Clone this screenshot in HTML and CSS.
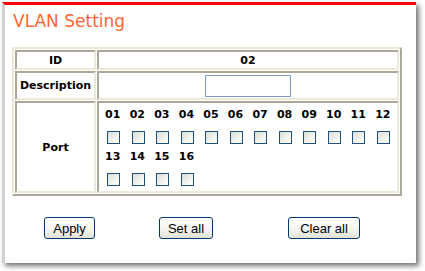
FILE: index.html
```html
<!DOCTYPE html>
<html>
<head>
<meta charset="utf-8">
<title>VLAN Setting</title>
<link rel="stylesheet" href="styles.css">
</head>
<body>
<div class="window">
  <h1 class="title">VLAN Setting</h1>
  <table class="vlan">
    <tr class="row-id">
      <td class="head">ID</td>
      <td class="val">02</td>
    </tr>
    <tr class="row-desc">
      <td class="head">Description</td>
      <td class="val"><input class="desc" type="text"></td>
    </tr>
    <tr class="row-port">
      <td class="head">Port</td>
      <td class="ports">
        <div class="port-grid">
          <label class="port"><span>01</span><input type="checkbox"></label>
          <label class="port"><span>02</span><input type="checkbox"></label>
          <label class="port"><span>03</span><input type="checkbox"></label>
          <label class="port"><span>04</span><input type="checkbox"></label>
          <label class="port"><span>05</span><input type="checkbox"></label>
          <label class="port"><span>06</span><input type="checkbox"></label>
          <label class="port"><span>07</span><input type="checkbox"></label>
          <label class="port"><span>08</span><input type="checkbox"></label>
          <label class="port"><span>09</span><input type="checkbox"></label>
          <label class="port"><span>10</span><input type="checkbox"></label>
          <label class="port"><span>11</span><input type="checkbox"></label>
          <label class="port"><span>12</span><input type="checkbox"></label>
          <label class="port"><span>13</span><input type="checkbox"></label>
          <label class="port"><span>14</span><input type="checkbox"></label>
          <label class="port"><span>15</span><input type="checkbox"></label>
          <label class="port"><span>16</span><input type="checkbox"></label>
        </div>
      </td>
    </tr>
  </table>
  <div class="actions">
    <button class="btn btn-apply">Apply</button>
    <button class="btn btn-set">Set all</button>
    <button class="btn btn-clear">Clear all</button>
  </div>
</div>
</body>
</html>
```

FILE: styles.css
```css
html, body {
  margin: 0;
  padding: 0;
  background: #ffffff;
}

body {
  padding: 2px 9px 8px 2px;
  width: 425px;
  height: 271px;
  box-sizing: border-box;
  overflow: hidden;
}

.window {
  box-sizing: border-box;
  width: 414px;
  height: 261px;
  background: #ffffff;
  border-top: 3px solid #ff0000;
  border-left: 3px solid #d2d2d2;
  box-shadow: 3px 3px 5px rgba(0, 0, 0, 0.55);
}

.title {
  margin: 0;
  padding: 6px 0 0 8px;
  height: 20px;
  font-family: "DejaVu Sans", Verdana, sans-serif;
  font-size: 17px;
  line-height: 20px;
  font-weight: normal;
  color: #ff6633;
}

.vlan {
  margin: 16px 0 0 7px;
  width: 390px;
  border-collapse: separate;
  border-spacing: 1px;
  border-style: solid;
  border-width: 2px;
  border-color: #ece9d8 #aca899 #aca899 #ece9d8;
  font-family: "DejaVu Sans", Verdana, sans-serif;
  font-size: 11px;
  font-weight: bold;
  color: #000000;
}

.vlan td {
  padding: 0;
  border-style: solid;
  border-width: 2px;
  border-color: #aca899 #ece9d8 #ece9d8 #aca899;
  text-align: center;
  vertical-align: middle;
}

.vlan td.head {
  width: 77px;
}

.row-id { height: 20px; }
.row-desc { height: 29px; }
.row-port { height: 91px; }

.desc {
  box-sizing: border-box;
  width: 86px;
  height: 22px;
  margin: 0;
  padding: 0 2px;
  border: 1px solid #7f9db9;
  background: #ffffff;
  vertical-align: middle;
}

.vlan td.ports {
  text-align: left;
  vertical-align: top;
  padding: 0 0 0 1.5px;
}

.port-grid {
  display: grid;
  grid-template-columns: repeat(12, 24.55px);
  padding-top: 4px;
}

.port {
  display: flex;
  flex-direction: column;
  align-items: center;
  height: 42px;
}

.port span {
  display: block;
  line-height: 16px;
  height: 16px;
}

.port input {
  appearance: none;
  -webkit-appearance: none;
  box-sizing: border-box;
  width: 13px;
  height: 13px;
  margin: 8px 0 0 1.5px;
  border: 1px solid #1c5180;
  background: linear-gradient(135deg, #dcdcd7 0%, #f6f6f3 70%, #ffffff 100%);
}

.actions {
  display: flex;
  align-items: center;
  margin-top: 21px;
  padding-left: 39px;
}

.btn {
  box-sizing: border-box;
  height: 22px;
  padding: 0;
  border: 1px solid #003c74;
  border-radius: 3px;
  background: linear-gradient(#ffffff 0%, #f4f3ee 60%, #e3e1d6 100%);
  font-family: "Liberation Sans", Arial, sans-serif;
  font-size: 13px;
  color: #000000;
}

.btn-apply { width: 51px; }
.btn-set { width: 54px; margin-left: 64px; }
.btn-clear { width: 72px; margin-left: 75px; }
```
